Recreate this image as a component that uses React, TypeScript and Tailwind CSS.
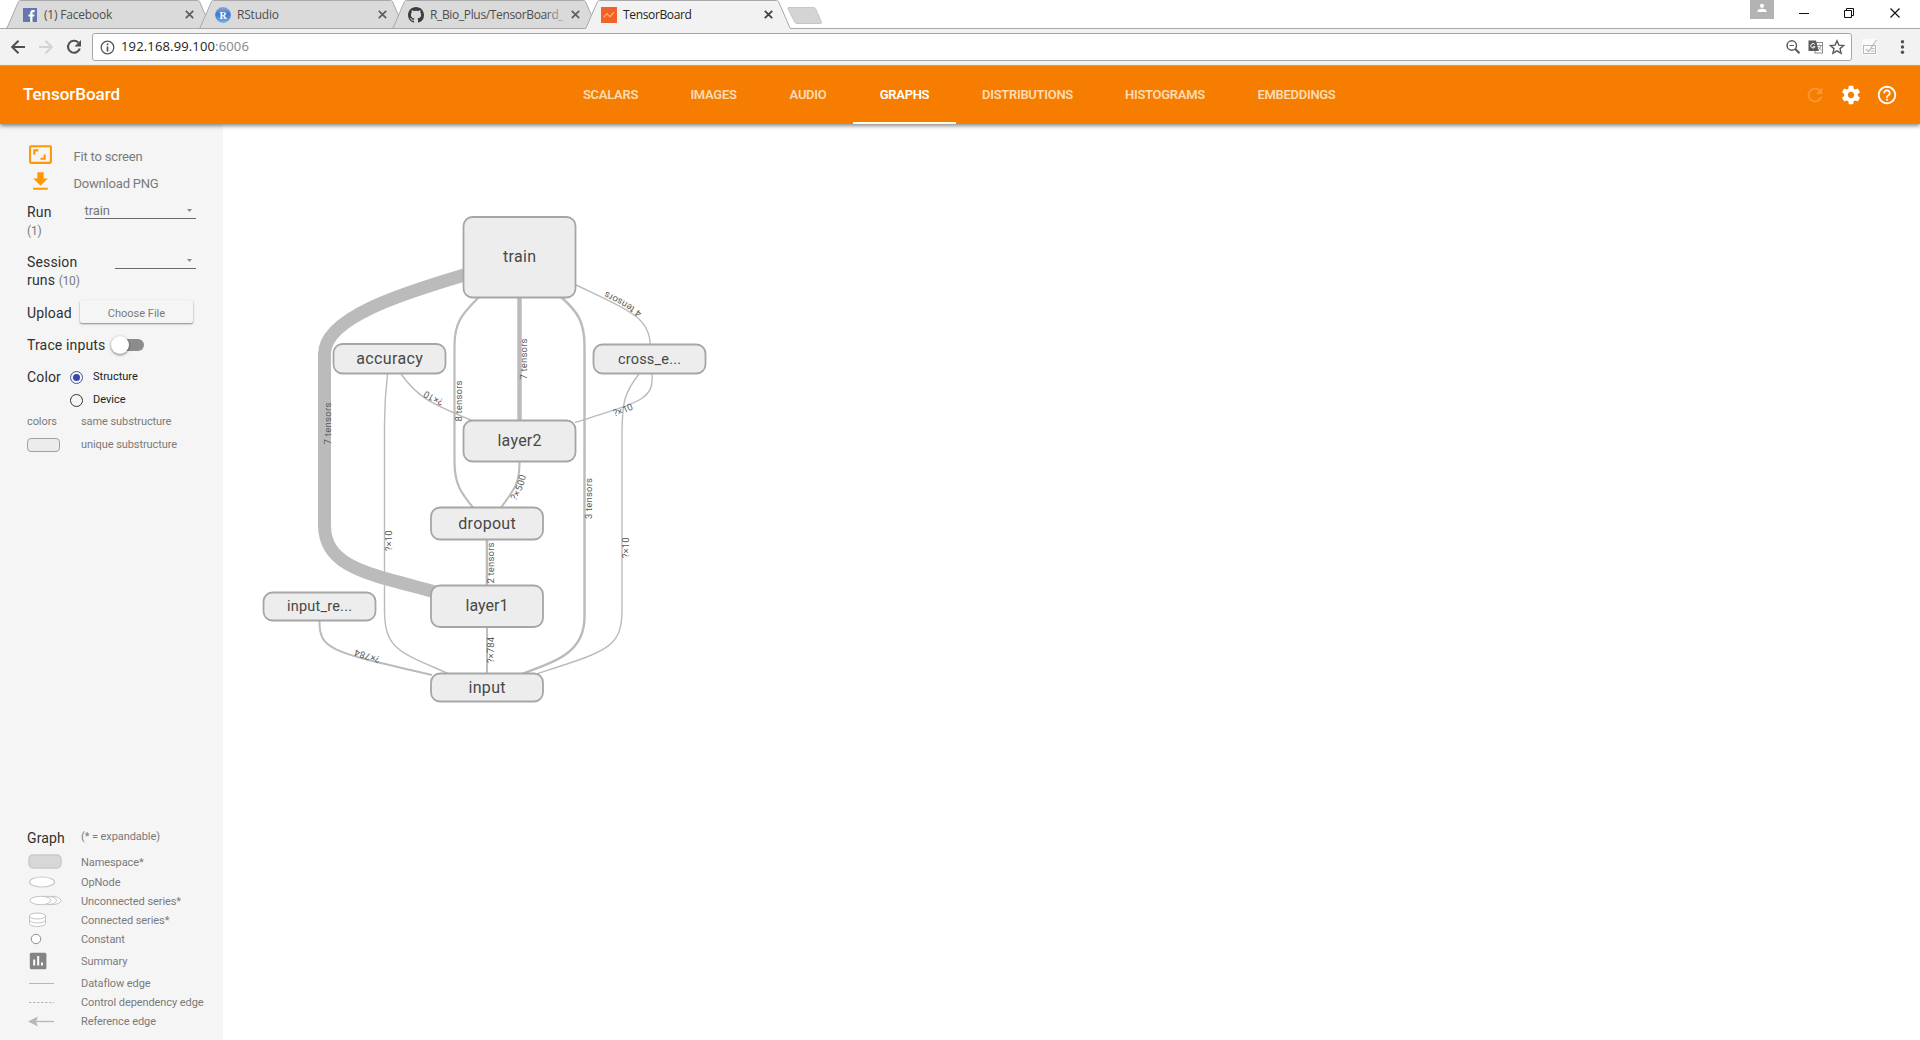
import React from 'react';

/* ---------- Browser chrome ---------- */

function Close({ dark }: { dark?: boolean }) {
  return (
    <svg width="9" height="9" viewBox="0 0 9 9" className="shrink-0">
      <path d="M.8 .8L8.2 8.2M8.2 .8L.8 8.2" stroke={dark ? '#3f3f3f' : '#5e5e5e'} strokeWidth="1.7" />
    </svg>
  );
}

function FacebookIcon() {
  return (
    <svg width="14" height="14" viewBox="0 0 14 14" className="shrink-0">
      <rect width="14" height="14" fill="#6277ae" />
      <path d="M7.2 14V8.6H5.4V6.4h1.8V5c0-1.900 1.100-2.900 2.800-2.900h1.600v2.100h-1.100c-.8 0-1 .4-1 1v1.200h2l-.3 2.200H9.500V14z" fill="#fff" />
    </svg>
  );
}

function RStudioIcon() {
  return (
    <svg width="16" height="16" viewBox="0 0 16 16" className="shrink-0">
      <defs>
        <linearGradient id="rs" x1="0" y1="0" x2="0" y2="1">
          <stop offset="0" stopColor="#86a9e0" />
          <stop offset=".45" stopColor="#4377cc" />
          <stop offset="1" stopColor="#69b6ec" />
        </linearGradient>
      </defs>
      <circle cx="8" cy="8" r="7.900" fill="url(#rs)" />
      <text x="8" y="11.500" textAnchor="middle" fontSize="10" fontWeight="700" fill="#fff" fontFamily="Liberation Serif, serif">R</text>
    </svg>
  );
}

function GithubIcon() {
  return (
    <svg width="16" height="16" viewBox="0 0 16 16" className="shrink-0">
      <path fill="#3d3d3d" d="M8 0C3.580 0 0 3.580 0 8c0 3.540 2.290 6.530 5.470 7.590.4.070.55-.17.55-.38 0-.19-.01-.82-.01-1.490-2.010.37-2.530-.49-2.690-.94-.09-.23-.48-.94-.82-1.130-.28-.15-.68-.52-.01-.53.63-.01 1.080.58 1.230.82.72 1.210 1.870.87 2.330.66.070-.52.28-.87.51-1.070-1.780-.2-3.640-.89-3.640-3.950 0-.87.31-1.590.82-2.150-.08-.2-.36-1.020.08-2.120 0 0 .67-.21 2.200.82.64-.18 1.320-.27 2-.27s1.360.09 2 .27c1.530-1.040 2.200-.82 2.200-.82.44 1.100.16 1.920.08 2.120.51.56.82 1.270.82 2.150 0 3.070-1.870 3.750-3.650 3.950.29.25.54.73.54 1.480 0 1.070-.01 1.930-.01 2.200 0 .21.15.46.55.38A8.010 8.010 0 0016 8c0-4.420-3.580-8-8-8z" />
    </svg>
  );
}

function TensorBoardIcon() {
  return (
    <svg width="16" height="16" viewBox="0 0 16 16" className="shrink-0">
      <rect width="16" height="16" fill="#f4602c" />
      <path d="M2.800 10.200L6 6.800l3 3L13 5.300" fill="none" stroke="#ffb34d" strokeWidth="1.300" />
    </svg>
  );
}

function BrowserTab({ icon, title, active, box, tracking = 'tracking-[-0.2px]' }: { icon: React.ReactNode; title: string; active?: boolean; box: string; tracking?: string }) {
  return (
    <div className={`relative h-[29px] shrink-0 ${active ? 'z-10' : ''} ${box}`}>
      <svg className="absolute inset-0 h-full w-full" viewBox="0 0 206 29" preserveAspectRatio="none">
        <path d="M0 29L1 28L12.500 1.500Q13 .5 14.500 .5H191.500Q193 .5 193.500 1.500L205 28L206 29Z" fill={active ? '#f2f2f2' : '#dadada'} />
        <path d="M0 28.500L1 28L12.500 1.500Q13 .5 14.500 .5H191.500Q193 .5 193.500 1.500L205 28L206 28.500" fill="none" stroke="#a9a9a9" strokeWidth="1" />
        {!active && <path d="M0 28.500H206" stroke="#a6a6a6" />}
      </svg>
      <div className="relative flex h-[29px] items-center justify-between pr-[18px] pl-[15px]">
        <div className="flex items-center">
          <span className="flex w-[17px] justify-center">{icon}</span>
          <span className={`ml-[6px] text-[12px] whitespace-nowrap ${tracking} ${active ? 'text-[#222]' : 'text-[#4e4e4e]'}`}>
            {title}
          </span>
        </div>
        <Close dark={active} />
      </div>
    </div>
  );
}

function TabStrip() {
  return (
    <div className="flex h-[29px] bg-white shadow-[inset_0_-1px_0_#a9a9a9]">
      <BrowserTab box="ml-[6px] w-[206px]" icon={<FacebookIcon />} title="(1) Facebook" />
      <BrowserTab box="-ml-[13px] w-[206px]" icon={<RStudioIcon />} title="RStudio" />
      <div className="relative -ml-[13px]">
        <BrowserTab box="w-[206px]" icon={<GithubIcon />} title="R_Bio_Plus/TensorBoard_" tracking="tracking-[-0.35px]" />
        <div className="absolute top-[6px] right-[30px] h-[17px] w-[22px] bg-gradient-to-r from-[#dadada00] to-[#dadada]" />
      </div>
      <BrowserTab box="-ml-[13px] w-[206px]" icon={<TensorBoardIcon />} title="TensorBoard" active tracking="tracking-[-0.35px]" />
      <svg width="36" height="19" viewBox="0 0 36 19" className="mt-[6px] -ml-[4px]">
        <path d="M2 1.500H26.500Q28 1.500 28.500 2.500L34.500 16Q35 17.500 33.500 17.500H10Q8.500 17.500 8 16.500L1 3Q.5 1.500 2 1.500Z" fill="#d4d4d4" stroke="#c6c6c6" />
      </svg>
      <div className="ml-auto flex">
        <div className="h-[19px] w-[24px] bg-[#b3b3b3]">
          <svg width="24" height="19" viewBox="0 0 24 19">
            <circle cx="12" cy="5.800" r="2.100" fill="#fff" />
            <path d="M7.500 12V11c0-1.600 3-2.300 4.500-2.300s4.500.7 4.500 2.300v1z" fill="#fff" />
          </svg>
        </div>
        <svg width="146" height="28" viewBox="0 0 146 28" fill="none" stroke="#111" strokeWidth="1">
          <path d="M25 13.500H35" />
          <path d="M70.500 10.500h7v7h-7zM72.500 10.500v-2h7v7h-2" />
          <path d="M116.500 8.500l9 9M125.500 8.500l-9 9" strokeWidth="1.200" />
        </svg>
      </div>
    </div>
  );
}

function Toolbar() {
  return (
    <div className="flex h-[37px] items-center border-b border-[#b0b0b0] bg-[#f2f2f2]">
      <svg width="92" height="36" viewBox="0 0 92 36" fill="none" className="shrink-0">
        <path d="M25 18H12.500M18.500 11.700L12.200 18l6.300 6.300" stroke="#505050" strokeWidth="2" />
        <path d="M39 18H51.500M45.500 11.700l6.300 6.300-6.300 6.300" stroke="#d3d3d3" strokeWidth="2" />
        <path d="M78.300 13.500A6 6 0 1 0 79.800 19.500" stroke="#505050" strokeWidth="2.100" />
        <path d="M81 11v6.500h-6.500z" fill="#505050" />
      </svg>
      <div className="flex h-[28px] w-[1760px] shrink-0 items-center rounded-[3px] border border-[#a6a6a6] bg-white pl-[7px]">
        <svg width="15" height="15" viewBox="0 0 15 15" className="shrink-0">
          <circle cx="7.500" cy="7.500" r="6.300" fill="none" stroke="#555" strokeWidth="1.300" />
          <path d="M7.500 3.500v1.700M7.500 6.400v5" stroke="#555" strokeWidth="1.700" />
        </svg>
        <span className="ml-[6px] flex-1 text-[13px] tracking-[0.15px] whitespace-nowrap text-[#222]">
          192.168.99.100<span className="text-[#858585]">:6006</span>
        </span>
        <svg width="66" height="26" viewBox="0 0 66 26" fill="none" className="-mr-[1px]">
          <circle cx="5.800" cy="11.500" r="4.700" stroke="#5a5a5a" strokeWidth="1.500" />
          <path d="M9.200 15L13.500 19.300" stroke="#5a5a5a" strokeWidth="2" />
          <path d="M3.500 11.500H8" stroke="#5a5a5a" strokeWidth="1" />
          <rect x="29" y="8.500" width="7.500" height="10.500" stroke="#8d8d8d" fill="#fff" />
          <path d="M22.500 6.500h7.500l2.800 10.500H22.500z" fill="#5a5a5a" />
          <path d="M28.800 10.500a2.200 2.200 0 1 0 .2 2.200h-2" stroke="#fff" strokeWidth="1" />
          <path d="M31 11.500h5M33.500 10.500v1M35 11.500c-.5 2.500-2 4-3 4.700M32.500 13l3 3.500" stroke="#8d8d8d" strokeWidth=".9" />
          <path d="M51 6.800l1.900 4.300 4.700.4-3.600 3.100 1.100 4.600-4.100-2.400-4.100 2.400 1.100-4.600-3.600-3.100 4.700-.4z" stroke="#5a5a5a" strokeWidth="1.400" />
        </svg>
      </div>
      <svg width="68" height="36" viewBox="0 0 68 36" fill="none" className="shrink-0">
        <rect x="10" y="10" width="15" height="16" fill="#fafafa" />
        <rect x="11.500" y="16.500" width="12" height="8" stroke="#b9b9b9" />
        <path d="M14 20l2.500 2.500L24.500 11M18.500 19.500h4M18.500 22h4" stroke="#b9b9b9" strokeWidth="1.200" />
        <circle cx="50.500" cy="12.800" r="1.700" fill="#505050" />
        <circle cx="50.500" cy="18" r="1.700" fill="#505050" />
        <circle cx="50.500" cy="23.200" r="1.700" fill="#505050" />
      </svg>
    </div>
  );
}

/* ---------- TensorBoard header ---------- */

const navTabs = [
  { label: 'SCALARS', width: 'w-[107px]' },
  { label: 'IMAGES', width: 'w-[99px]' },
  { label: 'AUDIO', width: 'w-[90px]' },
  { label: 'GRAPHS', width: 'w-[103px]', active: true },
  { label: 'DISTRIBUTIONS', width: 'w-[143px]' },
  { label: 'HISTOGRAMS', width: 'w-[132px]' },
  { label: 'EMBEDDINGS', width: 'w-[131px]' },
];

function Header() {
  return (
    <header className="relative z-10 flex h-[58px] shrink-0 bg-[#f77d00] shadow-[0_2px_4px_rgba(0,0,0,0.45)]">
      <div className="flex w-[557px] items-center pl-[23px] text-[17px] font-medium tracking-[-0.05px] text-white">
        <span>TensorBoard</span>
      </div>
      <nav className="flex">
        {navTabs.map((t) => (
          <div
            key={t.label}
            className={`flex items-center justify-center border-b-2 pt-[2px] text-[13px] font-semibold tracking-[-0.3px] ${t.width} ${
              t.active ? 'border-[#fffde7] text-white' : 'border-transparent text-[#fddbb3]'
            }`}
          >
            {t.label}
          </div>
        ))}
      </nav>
      <div className="mr-[22px] ml-auto flex items-center gap-[14px]">
        <svg width="22" height="22" viewBox="0 0 24 24" fill="#f9973b">
          <path d="M17.650 6.350C16.200 4.900 14.210 4 12 4c-4.420 0-7.990 3.580-7.990 8s3.570 8 7.990 8c3.730 0 6.840-2.550 7.730-6h-2.080c-.82 2.330-3.040 4-5.650 4-3.310 0-6-2.690-6-6s2.690-6 6-6c1.660 0 3.140.69 4.220 1.780L13 11h7V4l-2.350 2.350z" />
        </svg>
        <svg width="22" height="22" viewBox="0 0 24 24" fill="#fff">
          <path d="M19.430 12.980c.04-.32.070-.64.070-.98s-.03-.66-.07-.98l2.110-1.650c.19-.15.24-.42.12-.64l-2-3.460c-.12-.22-.39-.3-.61-.22l-2.490 1c-.52-.4-1.080-.73-1.690-.98l-.38-2.650C14.460 2.180 14.250 2 14 2h-4c-.25 0-.46.18-.49.42l-.38 2.650c-.61.25-1.170.59-1.690.98l-2.490-1c-.23-.09-.49 0-.61.22l-2 3.460c-.13.22-.07.49.12.64l2.110 1.650c-.04.32-.07.65-.07.98s.03.66.070.98l-2.110 1.650c-.19.15-.24.42-.12.64l2 3.460c.12.22.39.3.61.22l2.490-1c.52.4 1.080.73 1.690.98l.38 2.650c.03.24.24.42.49.42h4c.25 0 .46-.18.49-.42l.38-2.650c.61-.25 1.170-.59 1.690-.98l2.490 1c.23.09.49 0 .61-.22l2-3.460c.12-.22.070-.49-.12-.64l-2.110-1.650zM12 15.500c-1.930 0-3.500-1.570-3.500-3.500s1.570-3.500 3.500-3.500 3.500 1.570 3.500 3.500-1.570 3.500-3.500 3.500z" />
        </svg>
        <svg width="22" height="22" viewBox="0 0 24 24" fill="#fff">
          <path d="M11 18h2v-2h-2v2zm1-16C6.480 2 2 6.480 2 12s4.480 10 10 10 10-4.480 10-10S17.520 2 12 2zm0 18c-4.410 0-8-3.590-8-8s3.590-8 8-8 8 3.590 8 8-3.590 8-8 8zm0-14c-2.210 0-4 1.790-4 4h2c0-1.100.9-2 2-2s2 .9 2 2c0 2-3 1.750-3 5h2c0-2.250 3-2.500 3-5 0-2.210-1.790-4-4-4z" />
        </svg>
      </div>
    </header>
  );
}

/* ---------- Sidebar ---------- */

const label = 'text-[14px] tracking-[0.15px] text-[#303030]';
const small = 'text-[11px] tracking-[-0.08px] text-[#7a7a7a]';

function Caret() {
  return (
    <svg width="5" height="3" viewBox="0 0 5 3" className="mr-[4px]">
      <path d="M0 0H5L2.500 3Z" fill="#8a8a8a" />
    </svg>
  );
}

function Controls() {
  return (
    <div className="flex flex-col pt-[19px]">
      <div className="flex h-[27px] items-center pl-[28px]">
        <svg width="25" height="25" viewBox="0 0 24 24" fill="#ff9800" className="-mt-[4px]">
          <path d="M17 12h-2v3h-3v2h5v-5zM7 9h3V7H5v5h2V9zm14-6H3c-1.100 0-2 .9-2 2v14c0 1.100.9 2 2 2h18c1.100 0 2-.9 2-2V5c0-1.100-.9-2-2-2zm0 16.010H3V4.990h18v14.020z" />
        </svg>
        <span className="ml-[20.500px] text-[13px] tracking-[-0.18px] text-[#7a7a7a]">Fit to screen</span>
      </div>
      <div className="flex h-[27px] items-center pl-[28px]">
        <svg width="25" height="25" viewBox="0 0 24 24" fill="#ff9800" className="-mt-[4px]">
          <path d="M19 9h-4V3H9v6H5l7 7 7-7zM5 18v2h14v-2H5z" />
        </svg>
        <span className="ml-[20.500px] text-[13px] tracking-[-0.2px] text-[#7a7a7a]">Download PNG</span>
      </div>
      <div className="mt-[6px] flex h-[36px] pl-[27px]">
        <div className={`w-[57.500px] leading-[18px] ${label}`}>
          Run<br /><span className="text-[12px] tracking-[-0.2px] text-[#7a7a7a]">(1)</span>
        </div>
        <div className="flex h-[16px] w-[111px] items-center justify-between border-b border-[#6a6a6a] text-[13px] text-[#757575]">
          <span className="tracking-[-0.1px]">train</span>
          <Caret />
        </div>
      </div>
      <div className="mt-[14px] flex h-[36px] pl-[27px]">
        <div className={`w-[88px] leading-[18px] ${label}`}>
          Session<br />runs <span className="text-[12px] tracking-[-0.2px] text-[#7a7a7a]">(10)</span>
        </div>
        <div className="flex h-[16px] w-[81px] items-center justify-end border-b border-[#6a6a6a]">
          <Caret />
        </div>
      </div>
      <div className="mt-[10px] flex h-[28px] items-center pl-[27px]">
        <span className={`w-[53px] ${label}`}>Upload</span>
        <div className="-mt-[4px] flex h-[23px] w-[113px] items-center justify-center rounded-[2px] bg-[#f5f5f5] pt-[6px] text-[11px] text-[#7a7a7a] shadow-[0_1px_2px_rgba(0,0,0,0.45)]">
          Choose File
        </div>
      </div>
      <div className="mt-[4px] flex h-[28px] items-center pl-[27px]">
        <span className={`w-[84px] ${label}`}>Trace inputs</span>
        <div className="flex h-[12px] w-[33px] items-center rounded-full bg-gradient-to-r from-transparent from-30% to-[#8c8c8c] to-30%">
          <div className="h-[18px] w-[18px] rounded-full bg-white shadow-[0_1px_3px_rgba(0,0,0,0.5)]" />
        </div>
      </div>
      <div className="mt-[7px] flex h-[22px] items-center pl-[27px]">
        <span className={`w-[43px] ${label}`}>Color</span>
        <div className="flex h-[13px] w-[13px] items-center justify-center rounded-full border border-[#3f51b5]">
          <div className="h-[7px] w-[7px] rounded-full bg-[#3949ab]" />
        </div>
        <span className="ml-[10px] text-[11px] text-[#212121]">Structure</span>
      </div>
      <div className="mt-[1px] flex h-[22px] items-center pl-[70px]">
        <div className="h-[13px] w-[13px] rounded-full border border-[#333]" />
        <span className="ml-[10px] text-[11px] text-[#212121]">Device</span>
      </div>
      <div className={`flex h-[22px] items-center pl-[27px] ${small}`}>
        <span className="w-[54px]">colors</span>
        <span>same substructure</span>
      </div>
      <div className={`mt-[1px] flex h-[22px] items-center pl-[27px] ${small}`}>
        <span className="w-[54px]">
          <span className="block h-[14px] w-[33px] rounded-[4px] border-[1.500px] border-[#a0a0a0] bg-[#ececec]" />
        </span>
        <span>unique substructure</span>
      </div>
    </div>
  );
}

const line = '#b7b7b7';

const legend: { text: string; row: string; icon: React.ReactNode }[] = [
  { text: 'Namespace*', row: 'h-[25px] pt-[4px]', icon: <rect x="1" y="2" width="32" height="13" rx="4" fill="#d7d7d7" stroke="#cacaca" strokeWidth="1.500" /> },
  { text: 'OpNode', row: 'h-[19px]', icon: <ellipse cx="14" cy="9" rx="12.500" ry="5" fill="#fff" stroke="#c8c8c8" strokeWidth="1.200" /> },
  {
    text: 'Unconnected series*', row: 'h-[19px]',
    icon: (
      <g fill="#fff" stroke="#c4c4c4">
        <ellipse cx="23" cy="8.500" rx="10" ry="4.200" />
        <ellipse cx="18.500" cy="8.500" rx="10" ry="4.200" />
        <ellipse cx="12.500" cy="8.500" rx="10.500" ry="4.200" />
      </g>
    ),
  },
  {
    text: 'Connected series*', row: 'h-[19px]',
    icon: (
      <g fill="#fff" stroke="#c4c4c4">
        <path d="M1.500 5V12.500a8 3 0 0 0 16 0V5" />
        <path d="M1.500 9a8 3 0 0 0 16 0" fill="none" />
        <ellipse cx="9.500" cy="5" rx="8" ry="3" />
      </g>
    ),
  },
  { text: 'Constant', row: 'h-[19px]', icon: <circle cx="8" cy="9" r="4.700" fill="#fff" stroke="#8f8f8f" /> },
  {
    text: 'Summary', row: 'h-[25px]',
    icon: (
      <g>
        <rect x="1.800" y=".7" width="16.600" height="16.600" rx="1.500" fill="#848484" />
        <path d="M6.200 7.500v6M10.200 4v9.500M14 10.500v3" stroke="#fff" strokeWidth="2" />
      </g>
    ),
  },
  { text: 'Dataflow edge', row: 'h-[19px]', icon: <path d="M1 9.500H26" stroke={line} /> },
  { text: 'Control dependency edge', row: 'h-[19px]', icon: <path d="M1 9.500H26" stroke={line} strokeDasharray="2.500 1.500" /> },
  {
    text: 'Reference edge', row: 'h-[19px]',
    icon: (
      <g>
        <path d="M6 9.500H26" stroke={line} strokeWidth="1.300" />
        <path d="M0 9.500L10 4.500L8 9.500L10 14.500Z" fill={line} />
      </g>
    ),
  },
];

function Legend() {
  return (
    <div className="mt-auto flex h-[213px] flex-col">
      <div className="flex h-[22px] items-center pl-[27px]">
        <span className={`w-[54px] ${label}`}>Graph</span>
        <span className={`-mt-[2px] ${small}`}>(* = expandable)</span>
      </div>
      {legend.map((l) => (
        <div key={l.text} className={`flex shrink-0 items-center pl-[28px] ${l.row} ${small}`}>
          <svg width="36" height="18" viewBox="0 0 36 18" className="-mt-[4px]">{l.icon}</svg>
          <span className="ml-[17px] whitespace-nowrap">{l.text}</span>
        </div>
      ))}
    </div>
  );
}

/* ---------- Graph canvas ---------- */

const edges: { d: string; w: number }[] = [
  { d: 'M466 274.500C400 294 324.500 318 324.500 354L324.500 525C324.500 568 370 574 435 592', w: 13 },
  { d: 'M479 297C462 314 454.500 322 454.500 346L454.500 462C454.500 485 462 494 473 507.500', w: 2.2 },
  { d: 'M519.500 297V421', w: 4.500 },
  { d: 'M561 297C578 312 584.500 322 584.500 346L584.500 617C584.500 652 557 661 523 673.500', w: 2.400 },
  { d: 'M576 285C625 308 650 317 650 344', w: 1.400 },
  { d: 'M401 374C417 396 427 402 472 420.500', w: 1.400 },
  { d: 'M387.500 374C386 387 384.500 400 384.500 425L384.500 610C384.500 650 400 652 448 673.500', w: 1.400 },
  { d: 'M652 374C654 400 640 402 575 422.500', w: 1.400 },
  { d: 'M639 374C624 393 622.500 403 622 430L622 610C622 648 607 651 538 673.500', w: 1.400 },
  { d: 'M519.500 461C520 482 515 489 501 507.500', w: 2 },
  { d: 'M487 540V586', w: 2.600 },
  { d: 'M487 627V674', w: 1.900 },
  { d: 'M319.500 621C319 650 332 652 432 675', w: 2 },
];

const nodes = [
  { name: 'train', x: 463.5, y: 217, h: 80.5, tw: 33, fs: 16 },
  { name: 'accuracy', x: 333.5, y: 344, h: 29.5, tw: 66.5, fs: 16 },
  { name: 'cross_e...', x: 593.5, y: 344.5, h: 29, tw: 63, fs: 14.5 },
  { name: 'layer2', x: 463.5, y: 420.5, h: 41, tw: 44, fs: 16 },
  { name: 'dropout', x: 431, y: 507.5, h: 32, tw: 57.5, fs: 16 },
  { name: 'layer1', x: 431, y: 585.5, h: 41.5, tw: 43, fs: 16 },
  { name: 'input_re...', x: 263.5, y: 592.5, h: 28, tw: 65, fs: 14.5 },
  { name: 'input', x: 431, y: 673.5, h: 28, tw: 37, fs: 16 },
];

const labels: { text: string; id: string; d: string; len: number }[] = [
  { text: '7 tensors', id: 'l1', d: 'M331 444.500V395', len: 42 },
  { text: '7 tensors', id: 'l2', d: 'M527 379.500V330', len: 41 },
  { text: '8 tensors', id: 'l3', d: 'M462 421.500V370', len: 41 },
  { text: '3 tensors', id: 'l4', d: 'M592 519V465', len: 41 },
  { text: '2 tensors', id: 'l5', d: 'M494.300 583.500V530', len: 41 },
  { text: '?×10', id: 'l6', d: 'M392.300 551V520', len: 20.5 },
  { text: '?×10', id: 'l7', d: 'M629.300 558V525', len: 20.5 },
  { text: '?×784', id: 'l8', d: 'M494.300 663V625', len: 26 },
  { text: '?×500', id: 'l9', d: 'M515.500 501Q525 488 527 468', len: 28 },
  { text: '4 tensors', id: 'l10', d: 'M642 312.500Q628 301 598 287.500', len: 42 },
  { text: '?×10', id: 'l11', d: 'M443.500 399.500Q434 396 422 388', len: 20 },
  { text: '?×10', id: 'l12', d: 'M614.500 416.500Q624 414 640 406', len: 21 },
  { text: '?×784', id: 'l13', d: 'M380.500 656.500Q366 653 350 647', len: 26 },
];

function Graph() {
  return (
    <svg width="1697" height="916" viewBox="223 124 1697 916" className="font-[Roboto,sans-serif]">
      <g fill="none" stroke="#bbb">
        {edges.map((e) => (
          <path key={e.d} d={e.d} strokeWidth={e.w} />
        ))}
      </g>
      {nodes.map((n) => (
        <g key={n.name}>
          <rect x={n.x} y={n.y} width="112" height={n.h} rx="9" fill="#ededed" stroke="#a6a6a6" strokeWidth="1.800" />
          <text x={n.x + 56 - n.tw / 2} y={n.y + n.h / 2 + (n.fs === 16 ? 5.2 : 4.7)} textLength={n.tw} fontSize={n.fs} fill="#484848">{n.name}</text>
        </g>
      ))}
      {labels.map((l) => (
        <g key={l.id}>
          <path id={l.id} d={l.d} fill="none" />
          <text fontSize="9.500" fill="#5c5c5c" textLength={l.len}>
            <textPath href={`#${l.id}`} textLength={l.len}>{l.text}</textPath>
          </text>
        </g>
      ))}
    </svg>
  );
}

export default function App() {
  return (
    <div className="flex h-[1040px] w-[1920px] flex-col overflow-hidden bg-white">
      <div className="shrink-0 font-['Open_Sans',sans-serif]">
        <TabStrip />
        <Toolbar />
      </div>
      <div className="flex min-h-0 flex-1 flex-col font-[Roboto,sans-serif]">
        <Header />
        <main className="flex min-h-0 flex-1">
          <aside className="flex w-[223px] shrink-0 flex-col bg-[#f5f5f5]">
            <Controls />
            <Legend />
          </aside>
          <Graph />
        </main>
      </div>
    </div>
  );
}
